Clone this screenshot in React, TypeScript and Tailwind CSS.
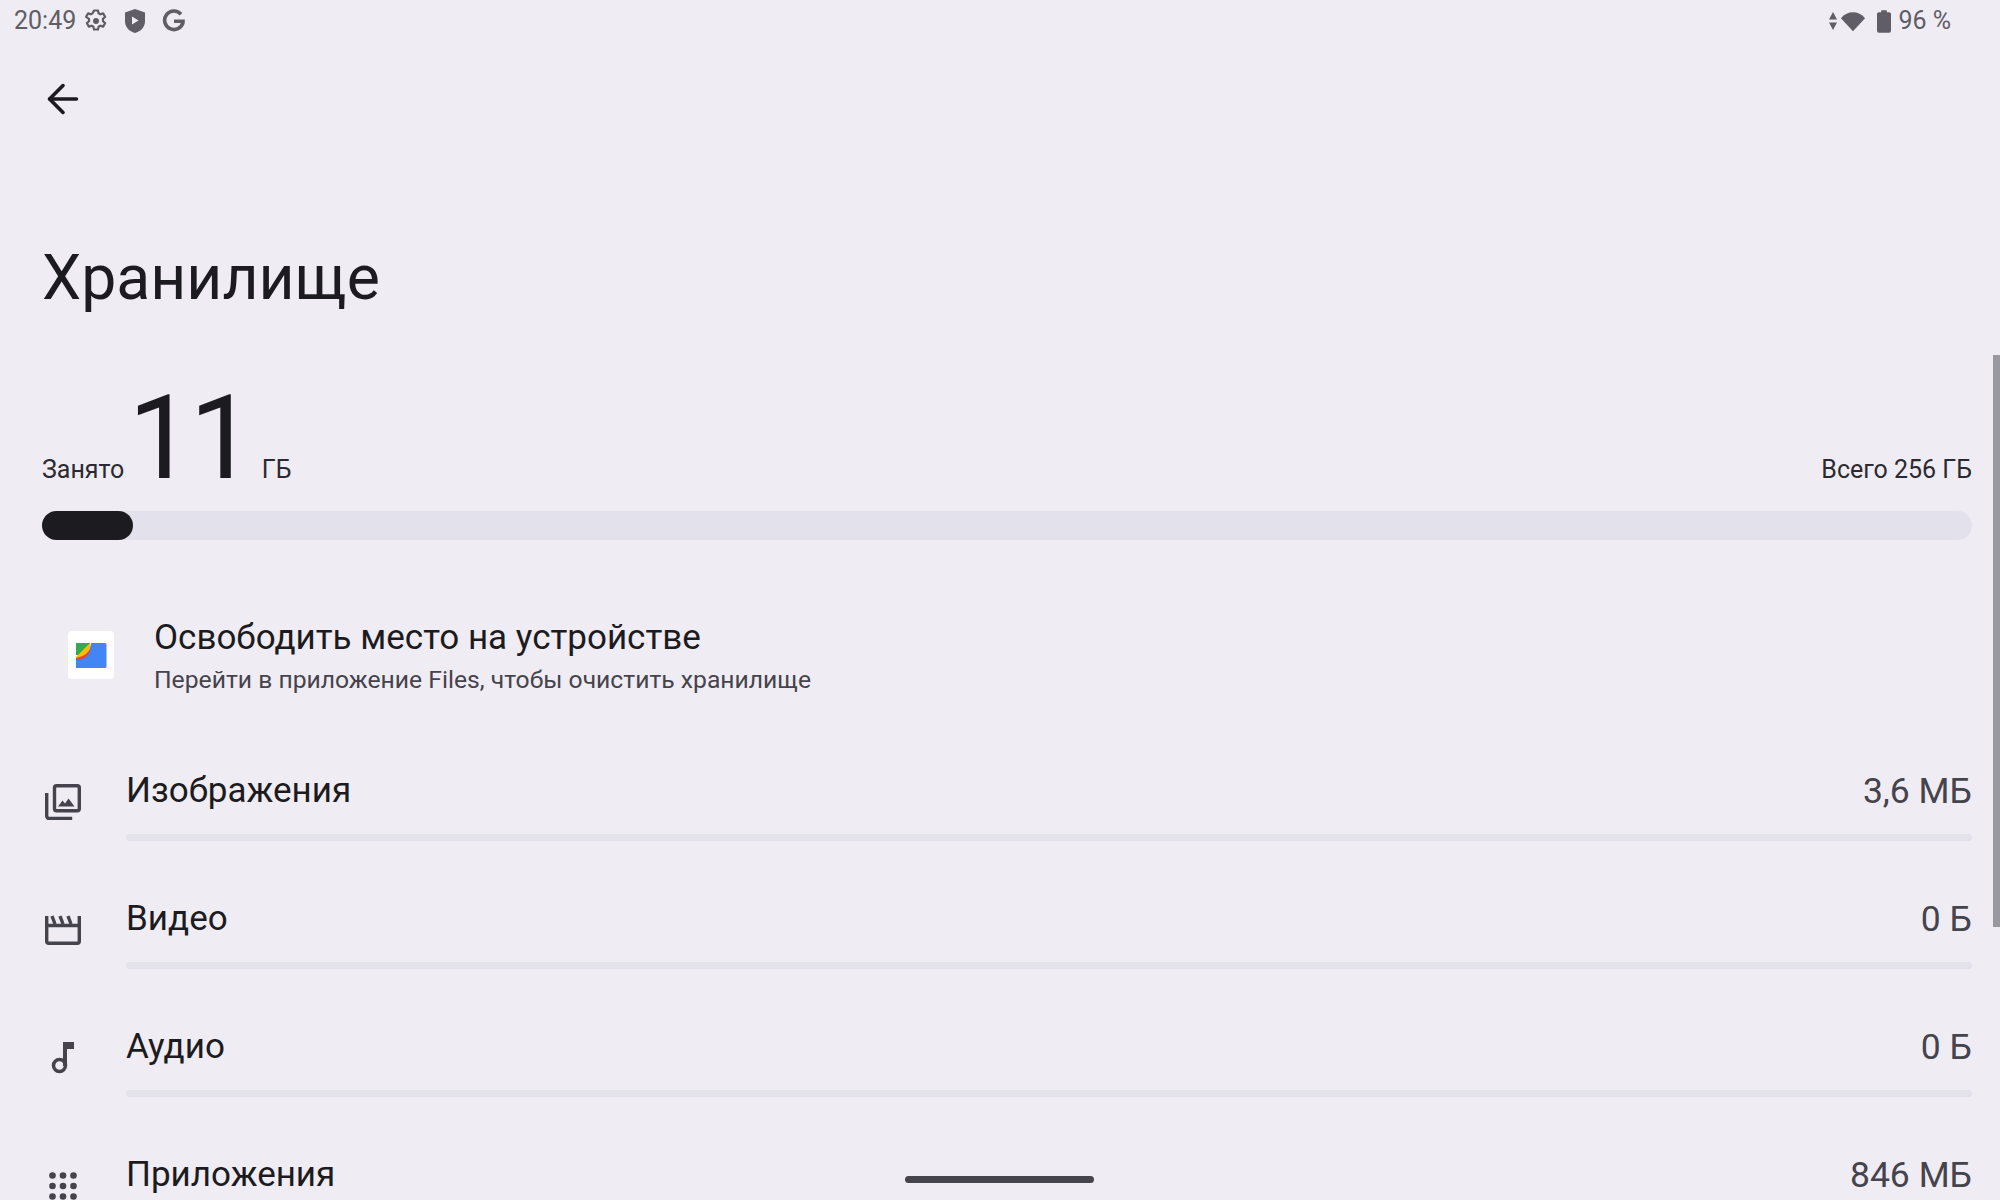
import { ArrowLeft } from "lucide-react";

const rows = [
  { title: "Изображения", value: "3,6 МБ", icon: <ImagesIcon /> },
  { title: "Видео", value: "0 Б", icon: <MovieIcon /> },
  { title: "Аудио", value: "0 Б", icon: <MusicIcon /> },
  { title: "Приложения", value: "846 МБ", icon: <AppsIcon /> },
];

function GearIcon() {
  return (
    <svg width="24" height="24" viewBox="0 0 24 24" fill="none" stroke="#605d66" strokeWidth="2.200">
      <path d="M10 1.500h4l.6 2.800 1.800 1 2.700-.9 2 3.500-2.100 1.900v2.400l2.100 1.900-2 3.500-2.700-.9-1.800 1-.6 2.800h-4l-.6-2.800-1.800-1-2.700.9-2-3.500 2.100-1.900V9.800L2.100 7.900l2-3.500 2.700.9 1.800-1z" strokeLinejoin="round" />
      <circle cx="12" cy="12" r="3" fill="#605d66" stroke="none" />
    </svg>
  );
}

function ShieldIcon() {
  return (
    <svg width="22" height="26" viewBox="0 0 22 26">
      <path d="M11 1l10 3.500v8.500c0 6-4.200 10.500-10 12C5.200 23.500 1 19 1 13V4.500z" fill="#605d66" />
      <path d="M8 8.500v8l6.500-4z" fill="#efecf4" />
    </svg>
  );
}

function GoogleIcon() {
  return (
    <svg width="24" height="24" viewBox="0 0 24 24" fill="none" stroke="#605d66" strokeWidth="3.600">
      <path d="M19 5.200A9.300 9.300 0 1 0 21 13.500v-1.300h-9" />
    </svg>
  );
}

function ImagesIcon() {
  return (
    <svg width="36" height="36" viewBox="0 0 36 36" fill="none" stroke="#45434b" strokeWidth="3.400">
      <rect x="9.500" y="1.700" width="24.800" height="25" rx="2" />
      <path d="M1.700 9v23a2.500 2.500 0 0 0 2.500 2.500h23" />
      <path d="M13 22.500l4.500-6 2.500 3 3.500-5 6 8z" fill="#45434b" stroke="none" />
    </svg>
  );
}

function MovieIcon() {
  return (
    <svg width="36" height="30" viewBox="0 0 36 30" fill="none" stroke="#45434b" strokeWidth="3.400">
      <path d="M1.700 1v25.300a2 2 0 0 0 2 2h28.600a2 2 0 0 0 2-2V1" />
      <path d="M1.700 10.500h32.600" />
      <path d="M7 1l3 8M15 1l3 8M23 1l3 8" />
    </svg>
  );
}

function MusicIcon() {
  return (
    <svg width="24" height="34" viewBox="0 0 24 34" fill="none">
      <path d="M12 1h11v7h-7v17h-4z" fill="#45434b" />
      <circle cx="8.500" cy="24.500" r="6" stroke="#45434b" strokeWidth="3.500" />
    </svg>
  );
}

function AppsIcon() {
  const dots = [3.500, 14, 24.500];
  return (
    <svg width="28" height="28" viewBox="0 0 28 28" fill="#45434b">
      {dots.map((y) => dots.map((x) => <circle key={`${x}-${y}`} cx={x} cy={y} r="3.300" />))}
    </svg>
  );
}

function FilesLogo() {
  return (
    <div className="mb-1 flex h-12 w-[46px] items-center justify-center rounded-[4px] bg-white">
      <svg width="32" height="27" viewBox="0 0 32 27">
        <path d="M1 1h14v12H1z" fill="#34a853" />
        <path d="M1 26V15L15 1l1 9-6 9z" fill="#fbbc04" />
        <path d="M1 26h14l4-16-3-9c0 8-5 13-15 15z" fill="#ea4335" />
        <path d="M16 1h14a1.500 1.500 0 0 1 1.500 1.500v22a1.500 1.500 0 0 1-1.500 1.500H2.500A1.500 1.500 0 0 1 1 24.500V18c10 0 15-6 15-17z" fill="#4285f4" />
      </svg>
    </div>
  );
}

export default function App() {
  return (
    <div className="relative h-[1200px] w-[2000px] overflow-hidden bg-[#efecf4] font-['Roboto',sans-serif] text-[#1c1b20]">
      <div className="flex h-[42px] items-center justify-between pl-[14px] pr-[49px] text-[25px] text-[#605d66]">
        <div className="flex items-center">
          <span>20:49</span>
          <span className="ml-2 flex items-center gap-4">
            <GearIcon />
            <ShieldIcon />
            <GoogleIcon />
          </span>
        </div>
        <div className="flex items-center">
          <svg width="8" height="18" viewBox="0 0 8 18" fill="#605d66">
            <path d="M4 0l4 7.500H0zM4 18L0 10.500h8z" />
          </svg>
          <svg className="ml-[3px]" width="26" height="22" viewBox="0 0 28 22" fill="#605d66">
            <path d="M14 22L1 8c7-8.500 19-8.500 26 0z" />
          </svg>
          <svg className="ml-[11px]" width="14" height="23" viewBox="0 0 15 24" fill="#605d66">
            <path d="M4.500 0h6v2H13a2 2 0 0 1 2 2v18a2 2 0 0 1-2 2H2a2 2 0 0 1-2-2V4a2 2 0 0 1 2-2h2.500z" />
          </svg>
          <span className="ml-[7px]">96 %</span>
        </div>
      </div>

      <div className="flex h-[113px] items-center pl-[40px]">
        <ArrowLeft size={46} strokeWidth={1.900} color="#1c1b20" />
      </div>

      <h1 className="mt-[81px] pl-[42px] text-[62.500px] leading-[84px] font-normal">Хранилище</h1>

      <div className="mt-[58px] pl-[42px] pr-7">
        <div className="flex items-baseline justify-between text-[25px] leading-8 text-[#2b2a30]">
          <div className="flex items-baseline">
            <span>Занято</span>
            <span className="ml-1 text-[116px] leading-[120px] tracking-[-4px] text-[#1c1b20]">11</span>
            <span className="ml-[11px]">ГБ</span>
          </div>
          <span>Всего 256 ГБ</span>
        </div>
        <div className="mt-[13px] h-[29px] rounded-full bg-[#e3e1eb]">
          <div className="h-full w-[91px] rounded-full bg-[#1c1b20]" />
        </div>
      </div>

      <div className="mt-[78px] flex items-center pl-[68px]">
        <FilesLogo />
        <div className="ml-10">
          <div className="text-[35px] leading-[40px]">Освободить место на устройстве</div>
          <div className="mt-[6px] text-[24.700px] leading-8 text-[#45434b]">Перейти в приложение Files, чтобы очистить хранилище</div>
        </div>
      </div>

      <div className="mt-[74px] flex flex-col pl-[42px] pr-7">
        {rows.map((row) => (
          <div key={row.title} className="flex h-[128px] items-start">
            <div className="mt-[14px] mr-[42px] flex h-9 w-[42px] items-center justify-center">{row.icon}</div>
            <div className="flex-1">
              <div className="mt-[1px] flex items-center justify-between text-[35px] leading-[40px]">
                <span>{row.title}</span>
                <span className="text-[35.500px] text-[#45434b]">{row.value}</span>
              </div>
              <div className="mt-[23px] h-[7px] rounded-full bg-[#e3e1eb]" />
            </div>
          </div>
        ))}
      </div>

      <div className="absolute right-0 top-[355px] h-[572px] w-[7px] bg-[#99979f]" />
      <div className="absolute bottom-[17px] left-[905px] h-[7px] w-[189px] rounded-full bg-[#45434b]" />
    </div>
  );
}
